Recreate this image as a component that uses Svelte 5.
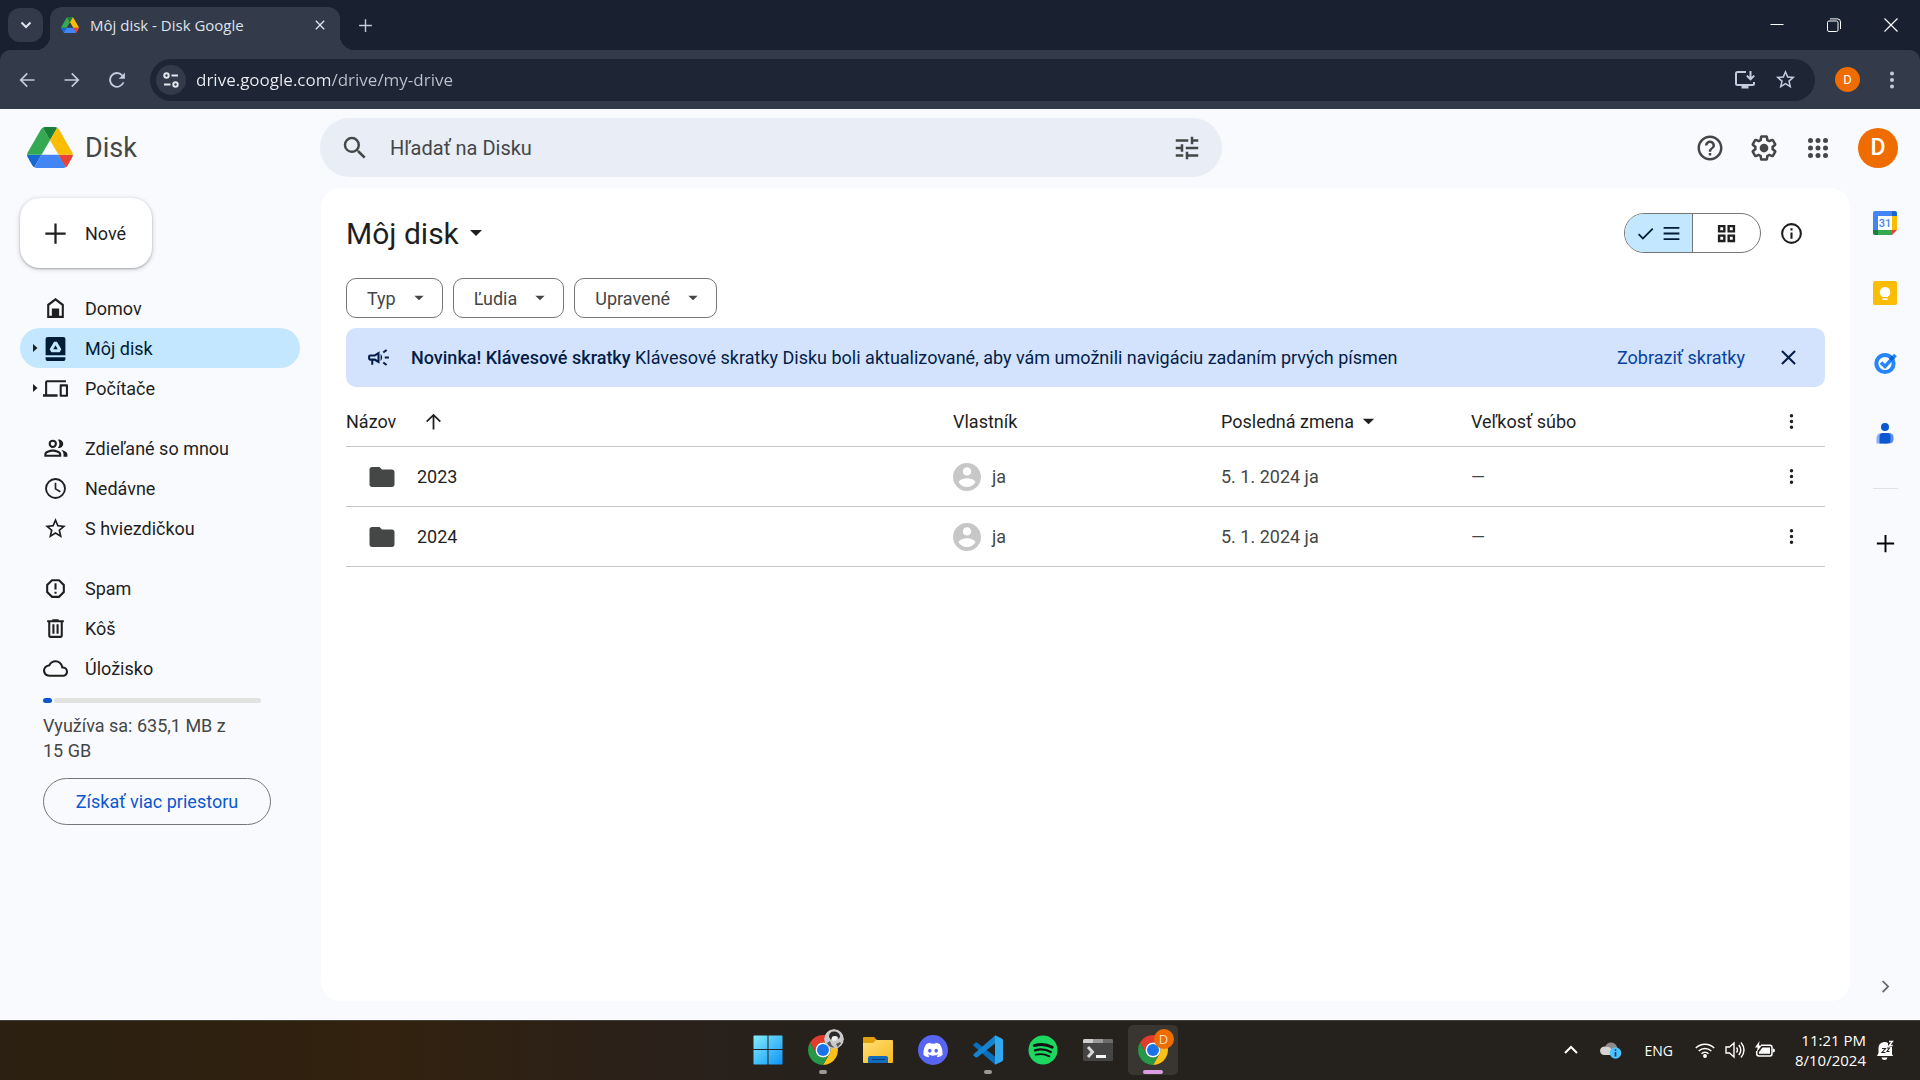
<script lang="ts">
  type NavItem = { label: string; icon: string; active?: boolean; expandable?: boolean };
  type FileRow = { name: string; owner: string; modified: string; by: string; size: string };

  const navGroups: NavItem[][] = [
    [
      { label: 'Domov', icon: 'home' },
      { label: 'Môj disk', icon: 'drive', active: true, expandable: true },
      { label: 'Počítače', icon: 'devices', expandable: true },
    ],
    [
      { label: 'Zdieľané so mnou', icon: 'people' },
      { label: 'Nedávne', icon: 'clock' },
      { label: 'S hviezdičkou', icon: 'star' },
    ],
    [
      { label: 'Spam', icon: 'spam' },
      { label: 'Kôš', icon: 'trash' },
      { label: 'Úložisko', icon: 'cloud' },
    ],
  ];

  const filters = ['Typ', 'Ľudia', 'Upravené'];

  const files: FileRow[] = [
    { name: '2023', owner: 'ja', modified: '5. 1. 2024', by: 'ja', size: '—' },
    { name: '2024', owner: 'ja', modified: '5. 1. 2024', by: 'ja', size: '—' },
  ];

  const storage = { used: 635.1, total: 15 * 1024 };
  const usedPercent = (storage.used / storage.total) * 100;

  const taskbarApps = [
    { name: 'Start', icon: 'windows', state: '' },
    { name: 'Google Chrome', icon: 'chrome-photo', state: 'running' },
    { name: 'File Explorer', icon: 'explorer', state: '' },
    { name: 'Discord', icon: 'discord', state: '' },
    { name: 'Visual Studio Code', icon: 'vscode', state: 'running' },
    { name: 'Spotify', icon: 'spotify', state: '' },
    { name: 'Terminal', icon: 'terminal', state: '' },
    { name: 'Google Chrome (D)', icon: 'chrome-d', state: 'focused' },
  ];

  let view = $state('list');
  let query = $state('');
  let url = $state('drive.google.com/drive/my-drive');

  // single-path glyphs on a 24 unit grid
  const glyphs: Record<string, string> = {
    search:
      'M15.5 14h-.79l-.28-.27A6.471 6.471 0 0 0 16 9.5 6.5 6.5 0 1 0 9.5 16c1.61 0 3.09-.59 4.23-1.57l.27.28v.79l5 4.99L20.49 19l-4.99-5zm-6 0C7.01 14 5 11.99 5 9.5S7.01 5 9.5 5 14 7.01 14 9.5 11.99 14 9.5 14z',
    tune: 'M3 17v2h6v-2H3zM3 5v2h10V5H3zm10 16v-2h8v-2h-8v-2h-2v6h2zM7 9v2H3v2h4v2h2V9H7zm14 4v-2H11v2h10zm-6-4h2V7h4V5h-4V3h-2v6z',
    help: 'M11 18h2v-2h-2v2zm1-16C6.48 2 2 6.48 2 12s4.48 10 10 10 10-4.48 10-10S17.52 2 12 2zm0 18c-4.41 0-8-3.59-8-8s3.59-8 8-8 8 3.59 8 8-3.59 8-8 8zm0-14c-2.21 0-4 1.79-4 4h2c0-1.1.9-2 2-2s2 .9 2 2c0 2-3 1.75-3 5h2c0-2.25 3-2.5 3-5 0-2.21-1.79-4-4-4z',
    settings:
      'M13.85 22.25h-3.7c-.74 0-1.36-.54-1.45-1.27l-.27-1.89c-.27-.14-.53-.29-.79-.46l-1.8.72c-.7.26-1.47-.03-1.81-.65L2.2 15.53c-.35-.66-.2-1.44.36-1.88l1.53-1.19c-.01-.15-.02-.3-.02-.46 0-.15.01-.31.02-.46l-1.52-1.19c-.59-.45-.74-1.26-.37-1.88l1.85-3.19c.34-.62 1.11-.9 1.79-.63l1.81.73c.26-.17.52-.32.78-.46l.27-1.91c.09-.7.71-1.25 1.44-1.25h3.7c.74 0 1.36.54 1.45 1.27l.27 1.89c.27.14.53.29.79.46l1.8-.72c.71-.26 1.48.03 1.82.65l1.84 3.18c.36.66.2 1.44-.36 1.88l-1.52 1.19c.01.15.02.3.02.46s-.01.31-.02.46l1.52 1.19c.56.45.72 1.23.37 1.86l-1.86 3.22c-.34.62-1.11.9-1.8.63l-1.8-.72c-.26.17-.52.32-.78.46l-.27 1.91c-.1.68-.72 1.22-1.46 1.22zm-3.23-2h2.76l.37-2.55.53-.22c.44-.18.88-.44 1.34-.78l.45-.34 2.38.96 1.38-2.4-2.03-1.58.07-.56c.03-.26.06-.51.06-.78s-.03-.53-.06-.78l-.07-.56 2.03-1.58-1.39-2.4-2.39.96-.45-.35c-.42-.32-.87-.58-1.33-.77l-.52-.22-.37-2.55h-2.76l-.37 2.55-.53.21c-.44.19-.88.44-1.34.79l-.45.33-2.38-.95-1.39 2.39 2.03 1.58-.07.56a7 7 0 0 0-.06.79c0 .26.02.53.06.78l.07.56-2.03 1.58 1.38 2.4 2.39-.96.45.35c.43.33.86.58 1.33.77l.53.22.38 2.55zM12 8.5a3.5 3.5 0 1 0 0 7 3.5 3.5 0 0 0 0-7z',
    apps: 'M6 8a2 2 0 1 0 0-4 2 2 0 0 0 0 4zm6 0a2 2 0 1 0 0-4 2 2 0 0 0 0 4zm6 0a2 2 0 1 0 0-4 2 2 0 0 0 0 4zM6 14a2 2 0 1 0 0-4 2 2 0 0 0 0 4zm6 0a2 2 0 1 0 0-4 2 2 0 0 0 0 4zm6 0a2 2 0 1 0 0-4 2 2 0 0 0 0 4zM6 20a2 2 0 1 0 0-4 2 2 0 0 0 0 4zm6 0a2 2 0 1 0 0-4 2 2 0 0 0 0 4zm6 0a2 2 0 1 0 0-4 2 2 0 0 0 0 4z',
    home: 'M12 2 4 8v13h16V8zm0 2.5L18 9v10h-2.5v-7h-7v7H6V9z',
    drive:
      'M4.5 1h15c1.1 0 2 .9 2 2v15.5h-19V3c0-1.1.9-2 2-2zM10.6 5.5 6.4 12.8 8 15.5h8l1.6-2.7-4.2-7.3zM12 8.8l2.1 3.9H9.900zM2.5 20.5h19V22c0 1-.9 2-2 2h-15c-1.1 0-2-1-2-2z',
    devices:
      'M4 6h18V4H4c-1.1 0-2 .9-2 2v11.5H0V20h14v-2.5H4V6zm19 2h-6c-.55 0-1 .45-1 1v10c0 .55.45 1 1 1h6c.55 0 1-.45 1-1V9c0-.55-.45-1-1-1zm-1 10h-4v-8h4v8z',
    people:
      'M9.4 3.5a4 4 0 1 0 0 8 4 4 0 0 0 0-8zm0 2a2 2 0 1 1 0 4 2 2 0 0 1 0-4zM9.4 13C6.5 13 1.3 14.4 1.3 17.5V20h16.2v-2.5C17.5 14.4 12.3 13 9.4 13zm0 2c2.3 0 6.1 1.1 6.1 2.5v.5H3.3v-.5c0-1.4 3.8-2.5 6.1-2.5zM14.2 3.7c1 .9 1.5 2.3 1.5 3.8s-.5 2.9-1.5 3.8a4 4 0 1 0 0-7.6zM17.3 13.4c1.5 1 2.4 2.3 2.4 4.1V20h3.7v-2.5c0-2.3-3.1-3.6-6.1-4.1z',
    clock:
      'M12 2a10 10 0 1 0 0 20 10 10 0 0 0 0-20zm0 18.2a8.2 8.2 0 1 1 0-16.4 8.2 8.2 0 0 1 0 16.4zM12.8 6.5h-1.6v6.2l5 3.1.9-1.3-4.3-2.6z',
    star: 'M22 9.24l-7.19-.62L12 2 9.19 8.63 2 9.24l5.46 4.73L5.82 21 12 17.27 18.18 21l-1.63-7.03L22 9.24zM12 15.4l-3.76 2.27 1-4.28-3.32-2.88 4.38-.38L12 6.1l1.71 4.04 4.38.38-3.32 2.88 1 4.28L12 15.4z',
    spam: 'M15.73 3H8.27L3 8.27v7.46L8.27 21h7.46L21 15.73V8.27L15.73 3zM19 14.9 14.9 19H9.1L5 14.9V9.1L9.1 5h5.8L19 9.1v5.8zM11 7h2v6h-2zM11 15h2v2h-2z',
    trash:
      'M15 4V3H9v1H4v2h1v13c0 1.1.9 2 2 2h10c1.1 0 2-.9 2-2V6h1V4h-5zm2 15H7V6h10v13zM9 8h2v9H9zm4 0h2v9h-2z',
    cloud:
      'M19.35 10.04A7.49 7.49 0 0 0 12 4C9.11 4 6.6 5.64 5.35 8.04A5.994 5.994 0 0 0 0 14c0 3.31 2.69 6 6 6h13c2.76 0 5-2.24 5-5 0-2.64-2.05-4.78-4.65-4.96zM19 18H6c-2.21 0-4-1.79-4-4 0-2.05 1.53-3.76 3.56-3.97l1.07-.11.5-.95A5.469 5.469 0 0 1 12 6c2.62 0 4.88 1.86 5.39 4.43l.3 1.5 1.53.11A2.98 2.98 0 0 1 22 15c0 1.65-1.35 3-3 3z',
    plus: 'M11 3h2v8h8v2h-8v8h-2v-8H3v-2h8z',
    check: 'M9 16.2 4.8 12l-1.4 1.4L9 19 21 7l-1.4-1.4z',
    list: 'M3 4.500h18v2.200H3zM3 10.900h18v2.200H3zM3 17.300h18v2.200H3z',
    grid: 'M3 3v8h8V3H3zm5.5 5.5h-3v-3h3v3zM3 13v8h8v-8H3zm5.5 5.5h-3v-3h3v3zM13 3v8h8V3h-8zm5.5 5.5h-3v-3h3v3zM13 13v8h8v-8h-8zm5.5 5.5h-3v-3h3v3z',
    info: 'M11 7h2v2h-2zM11 11h2v6h-2zM12 2a10 10 0 1 0 0 20 10 10 0 0 0 0-20zm0 18a8 8 0 1 1 0-16 8 8 0 0 1 0 16z',
    megaphone:
      'M18 11v2h4v-2h-4zM16 17.61c.96.71 2.21 1.65 3.2 2.39.4-.53.8-1.07 1.2-1.6-.99-.74-2.24-1.68-3.2-2.4-.4.54-.8 1.08-1.2 1.61zM20.4 5.6c-.4-.53-.8-1.07-1.2-1.6-.99.74-2.24 1.68-3.2 2.4.4.53.8 1.07 1.2 1.6.96-.72 2.21-1.65 3.2-2.4zM4 9c-1.1 0-2 .9-2 2v2c0 1.1.9 2 2 2h1v4h2v-4h1l5 3V6L8 9H4zm5.03 1.71L11 9.53v4.94l-1.97-1.18-.48-.29H4v-2h4.55l.48-.29zM15.5 12c0-1.33-.58-2.53-1.5-3.35v6.69c.92-.81 1.5-2.01 1.5-3.34z',
    close: 'M19 6.41 17.59 5 12 10.59 6.41 5 5 6.41 10.59 12 5 17.59 6.41 19 12 13.41 17.59 19 19 17.59 13.41 12z',
    more: 'M12 7.5a2 2 0 1 0 0-4 2 2 0 0 0 0 4zm0 6.5a2 2 0 1 0 0-4 2 2 0 0 0 0 4zm0 6.5a2 2 0 1 0 0-4 2 2 0 0 0 0 4z',
    up: 'M11 21V6.8l-6.1 6.1-1.4-1.4L12 3l8.5 8.5-1.4 1.4L13 6.8V21z',
    folder: 'M10 4H4c-1.1 0-2 .9-2 2v12c0 1.1.9 2 2 2h16c1.1 0 2-.9 2-2V8c0-1.1-.9-2-2-2h-8l-2-2z',
    chevron: 'M9.4 5 8 6.4l5.6 5.6L8 17.6 9.4 19l7-7z',
    caret: 'M4 8h16l-8 8z',
    back: 'M21 11H6.8l6.2-6.2L11.6 3.4 3 12l8.6 8.6 1.4-1.4L6.8 13H21z',
    forward: 'M3 11h14.2L11 4.8l1.4-1.4L21 12l-8.6 8.6-1.4-1.4 6.2-6.2H3z',
    reload: 'M18.7 14.7A7.2 7.2 0 1 1 17.5 7.2L14 10.500h7.5V3L19 5.600a9.400 9.400 0 1 0 1.900 9.100z',
  };
</script>

{#snippet glyph(name: string, size: number)}
  <svg class="glyph" width={size} height={size} viewBox="0 0 24 24" aria-hidden="true">
    <path fill="currentColor" fill-rule="evenodd" d={glyphs[name]} />
  </svg>
{/snippet}

{#snippet driveLogo(width: number, height: number)}
  <svg class="glyph" {width} {height} viewBox="0 0 87.3 78" aria-hidden="true">
    <path fill="#1967d2" d="m6.6 66.85 3.85 6.65c.8 1.4 1.95 2.5 3.3 3.3L27.5 53H0c0 1.55.4 3.1 1.2 4.5z" />
    <path fill="#34a853" d="M43.65 25 29.9 1.2c-1.35.8-2.5 1.9-3.3 3.3l-25.4 44A9.06 9.06 0 0 0 0 53h27.5z" />
    <path fill="#ea4335" d="M73.55 76.8c1.35-.8 2.5-1.9 3.3-3.3l1.6-2.75L86.1 57.5c.8-1.4 1.2-2.95 1.2-4.5H59.8l5.85 11.5z" />
    <path fill="#188038" d="M43.65 25 57.4 1.2C56.05.4 54.5 0 52.9 0H34.4c-1.6 0-3.15.45-4.5 1.2z" />
    <path fill="#4285f4" d="M59.8 53H27.5L13.75 76.8c1.35.8 2.9 1.2 4.5 1.2h50.8c1.6 0 3.15-.45 4.5-1.2z" />
    <path fill="#fbbc04" d="m73.4 26.5-12.7-22c-.8-1.4-1.95-2.5-3.3-3.3L43.65 25 59.8 53h27.45c0-1.55-.4-3.1-1.2-4.5z" />
  </svg>
{/snippet}

{#snippet chromeLogo()}
  <svg width="30" height="30" viewBox="0 0 48 48" aria-hidden="true">
    <path fill="#e33b2e" d="M24 12h20.78A24 24 0 0 0 3.22 12l10.39 18A12 12 0 0 1 24 12z" />
    <path fill="#fbc116" d="M24 12h20.78A24 24 0 0 1 24 48l10.39-18A12 12 0 0 0 24 12z" />
    <path fill="#279847" d="M34.39 30 24 48A24 24 0 0 1 3.22 12l10.39 18a12 12 0 0 0 20.78 0z" />
    <circle cx="24" cy="24" r="12" fill="#fff" />
    <circle cx="24" cy="24" r="9.6" fill="#1a73e8" />
  </svg>
{/snippet}

<div class="screen">
  <div class="browser">
    <div class="tab-strip">
      <button class="tab-search" aria-label="Search tabs">
        <svg width="12" height="12" viewBox="0 0 12 12"><path d="m1.5 3.5 4.5 4.5 4.5-4.5" fill="none" stroke="#dfe3ec" stroke-width="2" /></svg>
      </button>
      <div class="tab">
        {@render driveLogo(18, 16)}
        <span class="tab-title">Môj disk - Disk Google</span>
        <button class="plain" aria-label="Close tab">{@render glyph('close', 16)}</button>
      </div>
      <button class="plain new-tab" aria-label="New tab">{@render glyph('plus', 17)}</button>
      <div class="window-buttons">
        <button class="plain" aria-label="Minimize">
          <svg width="14" height="14" viewBox="0 0 14 14"><path d="M.5 6.5h13" stroke="#fff" /></svg>
        </button>
        <button class="plain" aria-label="Restore">
          <svg width="14" height="14" viewBox="0 0 14 14" fill="none" stroke="#fff"><rect x=".5" y="3" width="10.5" height="10.5" rx="1.5" /><path d="M3 .9h7.5a3 3 0 0 1 3 3V11" /></svg>
        </button>
        <button class="plain" aria-label="Close">
          <svg width="14" height="14" viewBox="0 0 14 14"><path d="m.5.5 13 13m0-13-13 13" stroke="#fff" stroke-width="1.2" /></svg>
        </button>
      </div>
    </div>

    <div class="toolbar">
      <button class="plain tool" aria-label="Back">{@render glyph('back', 20)}</button>
      <button class="plain tool" aria-label="Forward">{@render glyph('forward', 20)}</button>
      <button class="plain tool" aria-label="Reload">{@render glyph('reload', 20)}</button>
      <div class="omnibox">
        <button class="site-info" aria-label="View site information">
          <svg width="16" height="16" viewBox="0 0 16 16" fill="none" stroke="#e3e6ee" stroke-width="2"><circle cx="3.5" cy="3.5" r="2.2" /><path d="M8.5 3.5H15M1 12.5h6.5" /><circle cx="12.5" cy="12.5" r="2.2" /></svg>
        </button>
        <input class="url" aria-label="Address" spellcheck="false" bind:value={url} />
        <button class="plain omni-action" aria-label="Install Google Drive">
          <svg width="20" height="20" viewBox="0 0 20 20" fill="none" stroke="currentColor" stroke-width="2"><path d="M11 2H2.5Q1 2 1 3.5v10Q1 15 2.5 15h15q1.5 0 1.5-1.5V12M15.5 1v8m-3.7-3.4 3.7 3.7 3.7-3.7" /><path d="M6.5 17h7" stroke-width="3" /></svg>
        </button>
        <button class="plain omni-action" aria-label="Bookmark this tab">{@render glyph('star', 23)}</button>
      </div>
      <button class="profile" aria-label="Profile">D</button>
      <button class="plain chrome-menu" aria-label="Menu">{@render glyph('more', 24)}</button>
    </div>
  </div>

  <div class="drive">
    <header>
      <a class="brand" href="#home">
        {@render driveLogo(46, 41)}
        <span>Disk</span>
      </a>
      <div class="search">
        <button class="plain search-icon" aria-label="Hľadať">{@render glyph('search', 30)}</button>
        <input aria-label="Hľadať na Disku" placeholder="Hľadať na Disku" bind:value={query} />
        <button class="plain search-icon" aria-label="Rozšírené vyhľadávanie">{@render glyph('tune', 30)}</button>
      </div>
      <div class="account">
        <button class="plain" aria-label="Podpora">{@render glyph('help', 30)}</button>
        <button class="plain" aria-label="Nastavenia">{@render glyph('settings', 30)}</button>
        <button class="plain" aria-label="Aplikácie Google">{@render glyph('apps', 30)}</button>
        <button class="avatar" aria-label="Účet Google">D</button>
      </div>
    </header>

    <aside class="sidebar">
      <button class="new-button">{@render glyph('plus', 27)}<span>Nové</span></button>
      <nav>
        {#each navGroups as group, i (i)}
          <ul>
            {#each group as item (item.label)}
              <li>
                <a href="#{item.icon}" class:active={item.active} aria-current={item.active ? 'page' : undefined}>
                  <span class="expander">
                    {#if item.expandable}
                      <svg width="5" height="8" viewBox="0 0 5 8"><path d="M0 0v8l4.5-4z" fill="#1f1f1f" /></svg>
                    {/if}
                  </span>
                  {@render glyph(item.icon, 25)}
                  <span>{item.label}</span>
                </a>
              </li>
            {/each}
          </ul>
        {/each}
      </nav>
      <div class="storage">
        <div class="meter" role="progressbar" aria-label="Úložisko" aria-valuenow={usedPercent} aria-valuemin="0" aria-valuemax="100">
          <div class="meter-used" style="width: {usedPercent}%"></div>
          <div class="meter-free"></div>
        </div>
        <p>Využíva sa: 635,1 MB z 15 GB</p>
        <button class="get-storage">Získať viac priestoru</button>
      </div>
    </aside>

    <main>
      <div class="title-row">
        <h1><button class="plain title">Môj disk {@render glyph('caret', 18)}</button></h1>
        <div class="view-toggle">
          <button class:selected={view === 'list'} aria-label="Zoznam" aria-pressed={view === 'list'} onclick={() => (view = 'list')}>
            {#if view === 'list'}{@render glyph('check', 21)}{/if}
            {@render glyph('list', 21)}
          </button>
          <button class:selected={view === 'grid'} aria-label="Mriežka" aria-pressed={view === 'grid'} onclick={() => (view = 'grid')}>
            {#if view === 'grid'}{@render glyph('check', 21)}{/if}
            {@render glyph('grid', 23)}
          </button>
        </div>
        <button class="plain row-icon" aria-label="Zobraziť podrobnosti">{@render glyph('info', 25)}</button>
      </div>

      <div class="chips">
        {#each filters as filter (filter)}
          <button class="chip" aria-haspopup="menu">{filter}{@render glyph('caret', 14)}</button>
        {/each}
      </div>

      <div class="banner">
        {@render glyph('megaphone', 25)}
        <p>
          <strong>Novinka! Klávesové skratky</strong>
          Klávesové skratky Disku boli aktualizované, aby vám umožnili navigáciu zadaním prvých písmen
        </p>
        <button class="plain banner-link">Zobraziť skratky</button>
        <button class="plain banner-close" aria-label="Zavrieť">{@render glyph('close', 25)}</button>
      </div>

      <table>
        <colgroup>
          <col />
          <col class="col-owner" />
          <col class="col-date" />
          <col class="col-size" />
          <col class="col-menu" />
        </colgroup>
        <thead>
          <tr>
            <th><div class="name-head">Názov {@render glyph('up', 21)}</div></th>
            <th>Vlastník</th>
            <th><div class="date-head">Posledná zmena {@render glyph('caret', 17)}</div></th>
            <th><div class="size-head">Veľkosť súboru</div></th>
            <th><button class="plain row-icon" aria-label="Viac možností">{@render glyph('more', 21)}</button></th>
          </tr>
        </thead>
        <tbody>
          {#each files as file (file.name)}
            <tr>
              <td class="name"><div class="name-cell">{@render glyph('folder', 30)}{file.name}</div></td>
              <td>
                <div class="owner-cell">
                  <svg width="28" height="28" viewBox="2 2 20 20"><path fill="#c7c7c7" d="M12 2C6.48 2 2 6.48 2 12s4.48 10 10 10 10-4.48 10-10S17.52 2 12 2zm0 3c1.66 0 3 1.34 3 3s-1.34 3-3 3-3-1.34-3-3 1.34-3 3-3zm0 14.2c-2.5 0-4.71-1.28-6-3.22.03-1.99 4-3.08 6-3.08 1.99 0 5.97 1.09 6 3.08-1.29 1.94-3.5 3.22-6 3.22z" /></svg>
                  {file.owner}
                </div>
              </td>
              <td>{file.modified} {file.by}</td>
              <td>{file.size}</td>
              <td><button class="plain row-icon" aria-label="Akcie: {file.name}">{@render glyph('more', 21)}</button></td>
            </tr>
          {/each}
        </tbody>
      </table>
    </main>

    <aside class="side-panel">
      <button class="plain" aria-label="Kalendár">
        <svg width="24" height="24" viewBox="0 0 24 24">
          <path fill="#4285f4" d="M2 0h17v5H5v14H0V2q0-2 2-2z" />
          <path fill="#1967d2" d="M19 0h3q2 0 2 2v3h-5z" />
          <path fill="#fbbc04" d="M19 5h5v14h-5z" />
          <path fill="#34a853" d="M5 19h14v5H5z" />
          <path fill="#188038" d="M0 19h5v5H2q-2 0-2-2z" />
          <path fill="#ea4335" d="M19 19h5l-5 5z" />
          <path fill="#fff" d="M5 5h14v14H5z" />
          <text x="12" y="16" text-anchor="middle" fill="#4285f4" font-size="11" font-weight="500">31</text>
        </svg>
      </button>
      <button class="plain" aria-label="Keep">
        <svg width="24" height="24" viewBox="0 0 24 24">
          <rect width="24" height="24" rx="2" fill="#fbbc04" />
          <path fill="#fff" d="M12 6a5.3 5.3 0 0 0-3 9.6V16h6v-.4A5.3 5.3 0 0 0 12 6zM9.5 17.2h5V19h-5z" />
        </svg>
      </button>
      <button class="plain" aria-label="Tasks">
        <svg width="24" height="24" viewBox="0 0 24 24">
          <circle cx="12" cy="12.500" r="8.6" fill="#fff" stroke="#2684fc" stroke-width="4" />
          <path d="m8 11.500 4 4L22.500 4" fill="none" stroke="#2684fc" stroke-width="3.600" />
          <path d="m16 7.500 3-3 2.500 2.500-3 3z" fill="#0b5fd3" />
        </svg>
      </button>
      <button class="plain" aria-label="Kontakty">
        <svg width="24" height="24" viewBox="0 0 24 24">
          <circle cx="12" cy="6" r="4" fill="#0b57d0" />
          <path fill="#8ab0fa" d="M3.5 22.5v-5q0-5.500 5.500-5.500h4v10.500z" />
          <path fill="#5c8df6" d="M11 12h5q4.500 0 4.500 4.500v1.500q0 4.500-4.500 4.500h-5z" />
          <path fill="#0b57d0" d="M10 12h4q3.500 0 3.500 3.500V19q0 3.500-3.500 3.500H6.500v-7Q6.500 12 10 12z" />
        </svg>
      </button>
      <hr />
      <button class="plain add-on" aria-label="Stiahnuť doplnky">{@render glyph('plus', 23)}</button>
      <button class="plain hide-panel" aria-label="Skryť bočný panel">{@render glyph('chevron', 21)}</button>
    </aside>
  </div>

  <footer class="taskbar">
    <div class="task-apps">
      {#each taskbarApps as app (app.name)}
        <button class="plain app {app.state}" aria-label={app.name}>
          {#if app.icon === 'windows'}
            <svg width="30" height="30" viewBox="0 0 30 30">
              <defs>
                <linearGradient id="win" x1="0" y1="0" x2="1" y2="1">
                  <stop stop-color="#84eefc" />
                  <stop offset="1" stop-color="#0b93f6" />
                </linearGradient>
              </defs>
              <path fill="url(#win)" d="M1 .5h13.500V14H.5V1zM15.500.5H29l.5.5v13h-14zM.5 15h14v14.500H1L.5 29zM15.500 15h14v14l-.5.5H15.500z" />
            </svg>
          {:else if app.icon === 'explorer'}
            <svg width="30" height="30" viewBox="0 0 30 30">
              <defs>
                <linearGradient id="dir" x1="0" y1="0" x2="1" y2="1">
                  <stop stop-color="#ffdf79" />
                  <stop offset="1" stop-color="#f8b91e" />
                </linearGradient>
              </defs>
              <path fill="#e2a00c" d="M1 2h10l3 3v5H0V3q0-1 1-1z" />
              <path fill="url(#dir)" d="M0 8h10l3-3h16q1 0 1 1v21q0 1-1 1H1q-1 0-1-1z" />
              <path fill="#0f6cbd" d="M5 28v-5q0-2 2-2h16q2 0 2 2v5z" />
              <path stroke="#073f78" d="M9 24.500h13" />
            </svg>
          {:else if app.icon === 'discord'}
            <svg width="30" height="30" viewBox="0 0 30 30">
              <circle cx="15" cy="15" r="15" fill="#5865f2" />
              <path transform="translate(5.4 5.4) scale(.8)" fill="#fff" d="M20.317 4.37a19.79 19.79 0 0 0-4.885-1.515.074.074 0 0 0-.079.037c-.21.375-.444.864-.608 1.25a18.27 18.27 0 0 0-5.487 0 12.64 12.64 0 0 0-.617-1.25.077.077 0 0 0-.079-.037A19.736 19.736 0 0 0 3.677 4.37a.07.07 0 0 0-.032.027C.533 9.046-.32 13.58.099 18.057a.082.082 0 0 0 .031.057 19.9 19.9 0 0 0 5.993 3.03.078.078 0 0 0 .084-.028 14.09 14.09 0 0 0 1.226-1.994.076.076 0 0 0-.041-.106 13.107 13.107 0 0 1-1.872-.892.077.077 0 0 1-.008-.128 10.2 10.2 0 0 0 .372-.292.074.074 0 0 1 .077-.01c3.928 1.793 8.18 1.793 12.062 0a.074.074 0 0 1 .078.01c.12.098.246.198.373.292a.077.077 0 0 1-.006.127 12.299 12.299 0 0 1-1.873.892.077.077 0 0 0-.041.107c.36.698.772 1.362 1.225 1.993a.076.076 0 0 0 .084.028 19.839 19.839 0 0 0 6.002-3.03.077.077 0 0 0 .032-.054c.5-5.177-.838-9.674-3.549-13.66a.061.061 0 0 0-.031-.03zM8.02 15.33c-1.183 0-2.157-1.085-2.157-2.419 0-1.333.956-2.419 2.157-2.419 1.21 0 2.176 1.096 2.157 2.42 0 1.333-.956 2.418-2.157 2.418zm7.975 0c-1.183 0-2.157-1.085-2.157-2.419 0-1.333.955-2.419 2.157-2.419 1.21 0 2.176 1.096 2.157 2.42 0 1.333-.946 2.418-2.157 2.418z" />
            </svg>
          {:else if app.icon === 'vscode'}
            <svg width="30" height="30" viewBox="0 0 30 30">
              <path fill="#0a6ebd" d="M.5 9.500 2.700 7.600Q3.400 7.200 4 7.600L22 21.500V29.500L.5 10.800Q0 10 .5 9.500z" />
              <path fill="#1583cf" d="M.5 20.500 2.700 22.400Q3.400 22.800 4 22.400L22 8.500V.5L.5 19.200Q0 20 .5 20.500z" />
              <path fill="#2fa8f0" d="M22 .2 28.800 3.400Q30 4 30 5.200V24.800Q30 26 28.800 26.600L22 29.800Z" />
            </svg>
          {:else if app.icon === 'spotify'}
            <svg width="30" height="30" viewBox="0 0 30 30" fill="none" stroke="#121212" stroke-linecap="round">
              <circle cx="15" cy="15" r="14.5" fill="#1ed760" stroke="none" />
              <path d="M6.300 10.600Q16 7.800 24.300 12.300" stroke-width="2.800" />
              <path d="M7 15.300Q15.500 13 22.800 17" stroke-width="2.300" />
              <path d="M7.700 19.700Q15 17.900 21.300 21.300" stroke-width="1.900" />
            </svg>
          {:else if app.icon === 'terminal'}
            <svg width="30" height="30" viewBox="0 0 30 30">
              <rect y="4" width="30" height="22" rx="1.5" fill="#454545" />
              <path fill="#cfcfcf" d="M1.500 4H10v4H0V5.500Q0 4 1.500 4z" />
              <path fill="#9a9a9a" d="M10 4h10v4H10z" />
              <path fill="#6c6c6c" d="M20 4h8.500Q30 4 30 5.500V8H20z" />
              <path d="m5 12 4.500 5L5 22" fill="none" stroke="#d8d8d8" stroke-width="3" />
              <path fill="#f5f5f5" d="M13 20h10v3H13z" />
            </svg>
          {:else}
            {@render chromeLogo()}
            {#if app.icon === 'chrome-d'}
              <span class="app-badge">D</span>
            {:else}
              <svg class="app-badge photo" width="20" height="20" viewBox="0 0 20 20">
                <circle cx="10" cy="10" r="10" fill="#c9c9c9" />
                <path fill="#2a2a2a" d="M5 8Q5 2.500 10 2.500t6 4.500q0 2-1.500 3L14 8q-3-2-6 0l-1 3z" />
                <path fill="#efefef" d="M8 8q3-1.500 5 0l-.5 3-2.500 1.500L8 11z" />
                <path fill="#5a5a5a" d="M3 14l3-2 1.500 4 3 2.500Q5.500 19 3 14zM12 15l4-2 1 1.500L13.500 18z" />
              </svg>
            {/if}
          {/if}
        </button>
      {/each}
    </div>
    <div class="tray">
      <button class="plain" aria-label="Show hidden icons">
        <svg width="14" height="14" viewBox="0 0 14 14"><path d="m1 10 6-6 6 6" fill="none" stroke="#fff" stroke-width="2" /></svg>
      </button>
      <button class="plain onedrive" aria-label="OneDrive">
        <svg width="22" height="18" viewBox="0 0 22 18">
          <path fill="#8d8a87" d="M5 6Q7 1 11.500 1.500 16 2 17 6v7H5z" />
          <path fill="#d6d4d2" d="M4.500 14a4.200 4.200 0 1 1 1-8.200Q10 5 12 9l-1 5z" />
          <circle cx="15.5" cy="12" r="5.8" fill="#4cc2ff" />
          <path stroke="#17394b" stroke-width="1.6" d="M15.5 11v4.500M15.5 8.200v1.600" />
        </svg>
      </button>
      <button class="plain language">ENG</button>
      <button class="plain status" aria-label="Network, volume and battery">
        <svg width="20" height="16" viewBox="0 0 20 16" fill="none" stroke="#fff" stroke-width="1.5">
          <path d="M.8 6a13 13 0 0 1 18.400 0M3.700 9a9 9 0 0 1 12.600 0M6.500 11.800a5 5 0 0 1 7 0" />
          <circle cx="10" cy="14" r="1.2" fill="#fff" />
        </svg>
        <svg width="20" height="18" viewBox="0 0 20 18" fill="none" stroke="#fff" stroke-width="1.4">
          <path d="M1 6h3.500L9 2v14l-4.500-4H1zM11.500 6.500q2 2.500 0 5M13.800 4q4 5 0 10M16 1.500q6 7.500 0 15" />
        </svg>
        <svg width="20" height="18" viewBox="0 0 20 18">
          <path d="M6 4.200h9Q17 4.200 17 6.500v6q0 2.500-2 2.500H4Q1.700 15 1.700 12.500V10" fill="none" stroke="#fff" stroke-width="1.5" />
          <path fill="#fff" d="M7.500 6.500H15v6.300H4V11zM18 7.500q2 0 2 2t-2 2zM4.500 0 0 6.500h2.700L1.800 11l5-6.500H4z" />
        </svg>
      </button>
      <button class="plain clock"><span>11:21 PM</span><span>8/10/2024</span></button>
      <button class="plain" aria-label="Notifications">
        <svg width="18" height="20" viewBox="0 0 18 20">
          <path fill="#fff" d="M8 2q3 0 4 1v3l4 1v7l1 2H1l1.500-3V8Q2.500 3 8 2zM5.500 17.500h6Q11 20 8.500 20t-3-2.500z" />
          <path d="M6 8.500h3.500L6 12.500h3.500M11 8h2.500L11 11.500h2.500" fill="none" stroke="#25211c" stroke-width="1.1" />
          <path d="M13 1.500h3.500L13.200 5.500h3.500" fill="none" stroke="#fff" stroke-width="1.3" />
        </svg>
      </button>
    </div>
  </footer>
</div>

<style>
  :global(body) {
    margin: 0;
  }

  .screen {
    display: flex;
    flex-direction: column;
    min-height: 100vh;
    background: #f9fafe;
    color: #1f1f1f;
    font-family: Roboto, 'Liberation Sans', sans-serif;
    font-size: 18px;
  }

  .screen * {
    box-sizing: border-box;
  }

  button,
  input {
    font: inherit;
    color: inherit;
  }

  .glyph {
    display: block;
    flex-shrink: 0;
  }

  .plain {
    display: flex;
    align-items: center;
    justify-content: center;
    padding: 0;
    border: 0;
    background: none;
  }

  /* browser window */
  .browser {
    background: #192030;
    font-family: 'Open Sans', 'Noto Sans', sans-serif;
  }

  .tab-strip,
  .toolbar {
    display: flex;
    align-items: center;
  }

  .tab-strip {
    height: 50px;
    padding: 0 1px 0 8px;
    color: #dfe3ec;
  }

  .tab-search {
    display: grid;
    place-items: center;
    width: 35px;
    height: 34px;
    padding: 0;
    border: 0;
    border-radius: 12px;
    background: #333a4a;
  }

  .tab {
    position: relative;
    display: flex;
    align-items: center;
    align-self: flex-end;
    width: 290px;
    height: 43px;
    margin-left: 7px;
    padding: 0 12px 8px 11px;
    border-radius: 12px 12px 0 0;
    background: #333a4a;
    font-size: 15px;
  }

  .tab::before,
  .tab::after {
    content: '';
    position: absolute;
    bottom: 0;
    width: 14px;
    height: 14px;
  }

  .tab::before {
    right: 100%;
    background: radial-gradient(circle at 0 0, transparent 14px, #333a4a 14px);
  }

  .tab::after {
    left: 100%;
    background: radial-gradient(circle at 100% 0, transparent 14px, #333a4a 14px);
  }

  .tab-title {
    flex: 1;
    padding-left: 11px;
  }

  .new-tab {
    width: 34px;
    height: 34px;
    margin-left: 8px;
    color: #c3cbdc;
  }

  .window-buttons {
    display: flex;
    margin-left: auto;
  }

  .window-buttons button {
    width: 57px;
    height: 50px;
  }

  .toolbar {
    height: 59px;
    padding: 0 12px 0 7px;
    border-radius: 10px 10px 0 0;
    background: #333a4a;
    color: #c3cbdc;
  }

  .tool {
    width: 40px;
    height: 40px;
    margin-right: 5px;
  }

  .omnibox {
    display: flex;
    flex: 1;
    align-items: center;
    height: 42px;
    margin-left: 8px;
    padding: 0 10px 0 6px;
    border-radius: 21px;
    background: #1e2635;
  }

  .site-info {
    display: grid;
    place-items: center;
    width: 30px;
    height: 30px;
    padding: 0;
    border: 0;
    border-radius: 50%;
    background: #333a4a;
  }

  /* the host is brighter than the path after it */
  .url {
    flex: 1;
    margin-left: 10px;
    padding: 0;
    border: 0;
    outline: 0;
    background: linear-gradient(90deg, #eceef3 134px, #bdc2cc 134px);
    background-clip: text;
    color: transparent;
    font-size: 17px;
  }

  .omni-action {
    width: 40px;
    height: 40px;
  }

  .profile,
  .avatar {
    padding: 0;
    border: 0;
    border-radius: 50%;
    background: #ef6c00;
    color: #fff;
    font-family: Roboto, sans-serif;
  }

  .profile {
    width: 25px;
    height: 25px;
    margin: 0 16px 0 20px;
    font-size: 13px;
  }

  .chrome-menu {
    width: 32px;
    height: 40px;
  }

  /* drive page */
  .drive {
    display: grid;
    flex: 1;
    grid-template-columns: 321px minmax(0, 1fr) 70px;
    grid-template-rows: 79px 1fr;
    padding-bottom: 19px;
  }

  header {
    display: flex;
    grid-column: 1 / -1;
    align-items: center;
    padding: 0 22px 2px 27px;
  }

  .brand {
    display: flex;
    align-items: center;
    gap: 12px;
    width: 293px;
    color: #444746;
    font-size: 27px;
    text-decoration: none;
  }

  .search {
    display: flex;
    flex: 0 1 902px;
    align-items: center;
    height: 59px;
    margin-right: auto;
    padding: 0 10px;
    border-radius: 30px;
    background: #e8edf6;
    color: #444746;
  }

  .search input {
    flex: 1;
    padding: 0 0 0 10px;
    border: 0;
    outline: 0;
    background: none;
    font-size: 20px;
  }

  .search input::placeholder {
    color: #444746;
    opacity: 1;
  }

  .search-icon {
    width: 50px;
    height: 50px;
  }

  .account {
    display: flex;
    align-items: center;
    gap: 24px;
    color: #444746;
  }

  .avatar {
    width: 40px;
    height: 40px;
    margin-left: 1px;
    font-size: 23px;
    font-weight: 500;
  }

  .sidebar {
    padding: 10px 21px 0 20px;
  }

  .new-button {
    display: flex;
    align-items: center;
    gap: 16px;
    width: 132px;
    height: 70px;
    padding: 0 0 0 22px;
    border: 0;
    border-radius: 20px;
    background: #fff;
    box-shadow:
      0 1px 2px rgb(60 64 67 / 35%),
      0 1px 4px 1px rgb(60 64 67 / 16%);
    font-weight: 450;
  }

  nav {
    display: grid;
    gap: 20px;
    margin-top: 20px;
  }

  ul {
    margin: 0;
    padding: 0;
    list-style: none;
  }

  nav a {
    display: flex;
    align-items: center;
    height: 40px;
    padding-left: 13px;
    border-radius: 20px;
    color: #1f1f1f;
    text-decoration: none;
  }

  nav a.active {
    background: #c2e7ff;
    color: #001d35;
  }

  nav .glyph {
    margin-right: 17px;
  }

  .expander {
    display: flex;
    width: 10px;
  }

  .storage {
    padding: 10px 29px 0 23px;
    color: #444746;
  }

  .meter {
    display: flex;
    gap: 2px;
    width: 218px;
    height: 5px;
  }

  .meter-used {
    min-width: 8px;
    border-radius: 3px;
    background: #0b57d0;
  }

  .meter-free {
    flex: 1;
    border-radius: 3px;
    background: #e1e3e1;
  }

  .storage p {
    width: 190px;
    margin: 10px 0 15px;
    line-height: 25px;
  }

  .get-storage {
    width: 100%;
    height: 47px;
    padding: 0;
    border: 1px solid #747775;
    border-radius: 24px;
    background: none;
    color: #0b57d0;
    font-weight: 450;
  }

  main {
    padding: 20px 25px;
    border-radius: 20px;
    background: #fff;
  }

  .title-row {
    display: flex;
    align-items: center;
    height: 50px;
    padding-right: 14px;
  }

  h1 {
    flex: 1;
    margin: 0;
    font-size: 30px;
    font-weight: 400;
  }

  .title {
    gap: 8px;
  }

  .view-toggle {
    display: flex;
    width: 137px;
    height: 40px;
    margin-right: 10px;
    overflow: hidden;
    border: 1px solid #747775;
    border-radius: 20px;
  }

  .view-toggle button {
    display: flex;
    flex: 1;
    align-items: center;
    justify-content: center;
    gap: 5px;
    padding: 0;
    border: 0;
    background: none;
  }

  .view-toggle button + button {
    border-left: 1px solid #747775;
  }

  .view-toggle .selected {
    background: #c2e7ff;
    color: #001d35;
  }

  .row-icon {
    width: 40px;
    height: 40px;
  }

  .chips {
    display: flex;
    gap: 10px;
    margin: 20px 0 10px;
  }

  .chip {
    display: flex;
    align-items: center;
    gap: 16px;
    height: 40px;
    padding: 0 16px 0 20px;
    border: 1px solid #747775;
    border-radius: 10px;
    background: #fff;
    color: #444746;
    font-weight: 450;
  }

  .banner {
    display: flex;
    align-items: center;
    height: 59px;
    padding: 0 17px 0 20px;
    border-radius: 10px;
    background: #d3e3fd;
    color: #041e49;
  }

  .banner p {
    flex: 1;
    margin: 0 0 0 20px;
  }

  .banner strong {
    font-weight: 500;
  }

  .banner-link {
    margin-right: 23px;
    color: #0842a0;
    font-weight: 450;
  }

  .banner-close {
    width: 40px;
    height: 40px;
  }

  table {
    width: 100%;
    table-layout: fixed;
    border-spacing: 0;
  }

  .col-owner {
    width: 268px;
  }

  .col-date {
    width: 250px;
  }

  .col-size {
    width: 105px;
  }

  .col-menu {
    width: 249px;
  }

  th,
  td {
    height: 60px;
    padding: 0;
    border-bottom: 1px solid #c7c7c7;
    text-align: left;
  }

  th {
    padding-top: 10px;
    font-weight: 450;
  }

  td {
    color: #444746;
  }

  td.name {
    color: #1f1f1f;
    font-weight: 450;
  }

  .name-head,
  .date-head,
  .name-cell,
  .owner-cell {
    display: flex;
    align-items: center;
  }

  .name-head {
    gap: 27px;
  }

  .date-head {
    gap: 6px;
  }

  .size-head {
    overflow: hidden;
    white-space: nowrap;
  }

  .name-cell {
    gap: 20px;
    padding-left: 21px;
  }

  .name-cell .glyph {
    color: #444746;
  }

  .owner-cell {
    gap: 11px;
  }

  td .row-icon,
  th .row-icon {
    margin: 0 14px 0 auto;
    color: #1f1f1f;
  }

  .side-panel {
    display: flex;
    flex-direction: column;
    align-items: center;
    padding-top: 10px;
  }

  .side-panel button {
    width: 50px;
    height: 50px;
    margin-bottom: 20px;
  }

  .side-panel hr {
    width: 25px;
    margin: 10px 0 29px;
    border: 0;
    border-top: 1px solid #e1e3e1;
  }

  .side-panel .add-on {
    color: #000;
  }

  .side-panel .hide-panel {
    height: 30px;
    margin: auto 0 0;
    color: #5f6368;
  }

  /* windows taskbar */
  .taskbar {
    display: grid;
    grid-template-columns: 1fr auto 1fr;
    height: 60px;
    padding-bottom: 1px;
    border-top: 1px solid #45413c;
    background: linear-gradient(90deg, #2b2011, #32220f 20%, #2b211a 34%, #25211d 45%, #25211c);
    color: #fff;
    font-family: 'Open Sans', 'Noto Sans', sans-serif;
    font-size: 15px;
  }

  .task-apps {
    display: flex;
    grid-column: 2;
    align-items: center;
    gap: 5px;
  }

  .app {
    position: relative;
    width: 50px;
    height: 50px;
    border-radius: 5px;
  }

  .app.focused {
    background: #393531;
  }

  .app.running::after,
  .app.focused::after {
    content: '';
    position: absolute;
    bottom: 1px;
    width: 8px;
    height: 4px;
    border-radius: 2px;
    background: #9b9896;
  }

  .app.focused::after {
    width: 20px;
    background: #dc9ee2;
  }

  .app-badge {
    position: absolute;
    top: 4px;
    right: 4px;
    width: 20px;
    height: 20px;
    border-radius: 50%;
    background: #ef6c00;
    color: #fbdcc2;
    font-size: 13px;
    line-height: 20px;
  }

  .app-badge.photo {
    background: none;
  }

  .tray {
    display: flex;
    align-items: center;
    justify-content: flex-end;
    padding-right: 26px;
  }

  .onedrive {
    margin: 0 22px;
  }

  .language {
    font-size: 14px;
  }

  .status {
    gap: 10px;
    margin: 0 20px 0 22px;
  }

  .clock {
    flex-direction: column;
    align-items: flex-end;
    margin-right: 10px;
    line-height: 20px;
  }
</style>
